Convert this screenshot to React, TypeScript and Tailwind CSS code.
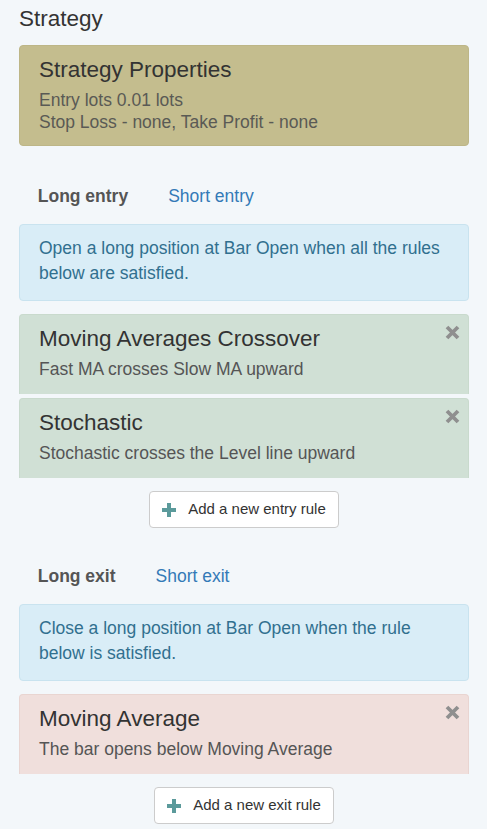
import React from 'react';

const FONT = { fontFamily: '"Liberation Sans", Arial, Helvetica, sans-serif' };

function RemoveIcon() {
  return (
    <svg width="15" height="15" viewBox="0 0 15 15" className="block">
      <path d="M2 2 L13 13 M13 2 L2 13" stroke="#8f8f8f" strokeWidth="3.8" strokeLinecap="butt" />
    </svg>
  );
}

function PlusIcon() {
  return (
    <svg width="14" height="14" viewBox="0 0 14 14" className="block">
      <path d="M7 0 V14 M0 7 H14" stroke="#5b9a9b" strokeWidth="4" />
    </svg>
  );
}

interface RuleProps {
  title: string;
  text: string;
  tone: 'green' | 'red';
}

function RuleCard({ title, text, tone }: RuleProps) {
  const bg = tone === 'green' ? 'bg-[#d0e0d5] border-[#c9dacd]' : 'bg-[#f0dfdc] border-[#e9d5d1]';
  return (
    <div className={`relative rounded-t-[4px] border border-b-0 ${bg} pl-[19px] pr-4 pt-[11px] pb-[14px]`}>
      <div className="text-[22.5px] leading-[25px] text-[#333]">{title}</div>
      <div className="mt-[7px] text-[17.5px] leading-[22px] text-[#555]">{text}</div>
      <button className="absolute right-[8px] top-[10px]">
        <RemoveIcon />
      </button>
    </div>
  );
}

function Tabs({ active, other }: { active: string; other: string }) {
  return (
    <div className="flex text-[17.5px] leading-[25px]">
      <span className="px-[18.75px] py-[12.5px] font-bold text-[#555]">{active}</span>
      <span className="ml-[2.5px] px-[18.75px] py-[12.5px] text-[#337ab7]">{other}</span>
    </div>
  );
}

function Info({ children }: { children: React.ReactNode }) {
  return (
    <div className="rounded-[4px] border border-[#c9e3ef] bg-[#d9edf7] pl-[19px] pr-4 pt-[11px] pb-[14px] text-[17.5px] leading-[25px] text-[#31708f]">
      {children}
    </div>
  );
}

function AddButton({ label }: { label: string }) {
  return (
    <div className="flex justify-center">
      <button className="flex items-center rounded-[4px] border border-[#cccccc] bg-white px-[12.5px] py-[6.25px] text-[15px] leading-[22.5px] text-[#333]">
        <PlusIcon />
        <span className="ml-[12px]">{label}</span>
      </button>
    </div>
  );
}

export default function App() {
  return (
    <div style={FONT} className="min-h-[829px] w-full bg-[#f3f7fa] pl-[19px] pr-[18px] pt-[6px]">
      <h3 className="text-[22.5px] leading-[25px] text-[#333]">Strategy</h3>

      <div className="mt-[14px] rounded-[4px] border border-[#bdb687] bg-[#c4bd8e] pl-[19px] pr-4 pt-[11px] pb-[12px]">
        <div className="text-[22.5px] leading-[25px] text-[#333]">Strategy Properties</div>
        <div className="mt-[7px] text-[17.5px] leading-[22px] text-[#5a5a55]">
          <div>Entry lots 0.01 lots</div>
          <div>Stop Loss - none, Take Profit - none</div>
        </div>
      </div>

      <div className="mt-[25px]">
        <Tabs active="Long entry" other="Short entry" />
      </div>
      <div className="mt-[3px]">
        <Info>Open a long position at Bar Open when all the rules below are satisfied.</Info>
      </div>
      <div className="mt-[13px] flex flex-col gap-[4px]">
        <RuleCard tone="green" title="Moving Averages Crossover" text="Fast MA crosses Slow MA upward" />
        <RuleCard tone="green" title="Stochastic" text="Stochastic crosses the Level line upward" />
      </div>
      <div className="mt-[13px]">
        <AddButton label="Add a new entry rule" />
      </div>

      <div className="mt-[23px]">
        <Tabs active="Long exit" other="Short exit" />
      </div>
      <div className="mt-[3px]">
        <Info>Close a long position at Bar Open when the rule below is satisfied.</Info>
      </div>
      <div className="mt-[13px]">
        <RuleCard tone="red" title="Moving Average" text="The bar opens below Moving Average" />
      </div>
      <div className="mt-[13px]">
        <AddButton label="Add a new exit rule" />
      </div>
    </div>
  );
}
